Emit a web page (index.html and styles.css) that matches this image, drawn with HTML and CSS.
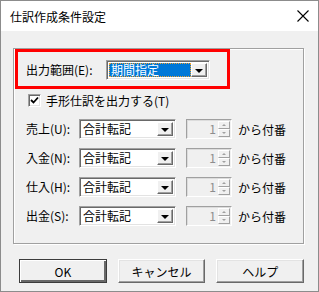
FILE: index.html
```html
<!DOCTYPE html>
<html lang="ja">
<head>
    <meta charset="UTF-8">
    <title>仕訳作成条件設定</title>
    <link rel="stylesheet" href="styles.css">
</head>
<body>
    <div class="window">
        <div class="titlebar">
            <span class="title">仕訳作成条件設定</span>
            <svg class="close" width="12" height="12" viewBox="0 0 12 12">
                <path d="M0.5 0.5 L11.5 11.5 M11.5 0.5 L0.5 11.5" stroke="#000" stroke-width="1.1" fill="none"/>
            </svg>
        </div>
        <div class="content">
            <div class="group">
                <div class="highlight">
                    <span class="label wide">出力範囲(E):</span>
                    <div class="combo focused">
                        <div class="value"><span class="sel">期間指定</span></div>
                        <div class="drop"><i></i></div>
                    </div>
                </div>
                <div class="check-row">
                    <span class="checkbox">
                        <svg width="9" height="9" viewBox="0 0 9 9"><path d="M1 4 L3.5 6.5 L8 1.5" stroke="#000" stroke-width="1.8" fill="none"/></svg>
                    </span>
                    <span>手形仕訳を出力する(T)</span>
                </div>
                <div class="row">
                    <span class="label">売上(U):</span>
                    <div class="combo"><div class="value">合計転記</div><div class="drop"><i></i></div></div>
                    <div class="spin"><div class="num">1</div><div class="arrows"><b class="up"></b><b class="down"></b></div></div>
                    <span class="suffix">から付番</span>
                </div>
                <div class="row">
                    <span class="label">入金(N):</span>
                    <div class="combo"><div class="value">合計転記</div><div class="drop"><i></i></div></div>
                    <div class="spin"><div class="num">1</div><div class="arrows"><b class="up"></b><b class="down"></b></div></div>
                    <span class="suffix">から付番</span>
                </div>
                <div class="row">
                    <span class="label">仕入(H):</span>
                    <div class="combo"><div class="value">合計転記</div><div class="drop"><i></i></div></div>
                    <div class="spin"><div class="num">1</div><div class="arrows"><b class="up"></b><b class="down"></b></div></div>
                    <span class="suffix">から付番</span>
                </div>
                <div class="row">
                    <span class="label">出金(S):</span>
                    <div class="combo"><div class="value">合計転記</div><div class="drop"><i></i></div></div>
                    <div class="spin"><div class="num">1</div><div class="arrows"><b class="up"></b><b class="down"></b></div></div>
                    <span class="suffix">から付番</span>
                </div>
            </div>
            <div class="buttons">
                <button class="default">OK</button>
                <button>キャンセル</button>
                <button>ヘルプ</button>
            </div>
        </div>
    </div>
</body>
</html>
```

FILE: styles.css
```css
* {
    margin: 0;
    padding: 0;
    box-sizing: border-box;
}

body {
    font-family: "Noto Sans CJK JP", "Noto Sans", sans-serif;
    font-size: 12px;
    color: #000;
}

.window {
    width: 319px;
    height: 292px;
    border: 1px solid #8c8c8c;
    background-color: #f0f0f0;
}

.titlebar {
    height: 30px;
    background-color: #fff;
    display: flex;
    align-items: center;
    justify-content: space-between;
    padding: 0 9px 0 9px;
}
.title {
    font-size: 12px;
}

.content {
    padding: 17px 14px 0 12px;
}

.group {
    height: 196px;
    border: 1px solid #a0a0a0;
    box-shadow: inset 1px 1px 0 #fff, 1px 1px 0 #fff;
    padding: 0 0 0 1px;
}

.highlight {
    width: 215px;
    height: 40px;
    border: 3px solid #f00;
    display: flex;
    align-items: center;
    padding: 2px 0 0 8px;
}

.label {
    width: 53px;
    flex: none;
    line-height: 16px;
}
.label.wide {
    width: 80px;
}

.combo {
    width: 97px;
    height: 20px;
    display: flex;
    background-color: #fff;
    border-top: 1px solid #a0a0a0;
    border-left: 1px solid #a0a0a0;
    border-right: 1px solid #fff;
    border-bottom: 1px solid #fff;
    box-shadow: inset 1px 1px 0 #696969, inset -1px -1px 0 #e3e3e3;
    padding: 2px;
}
.combo.focused {
    width: 104px;
}
.value {
    flex: 1;
    line-height: 14px;
    padding-left: 1px;
    white-space: nowrap;
}
.focused .value {
    background-color: #0078d7;
    color: #fff;
    outline: 1px dotted #f0a030;
    outline-offset: -1px;
}
.focused .sel {
    padding-left: 1px;
}
.drop {
    width: 16px;
    flex: none;
    background-color: #f0f0f0;
    border-top: 1px solid #fff;
    border-left: 1px solid #fff;
    border-right: 1px solid #696969;
    border-bottom: 1px solid #696969;
    box-shadow: inset -1px -1px 0 #a0a0a0;
    display: flex;
    align-items: center;
    justify-content: center;
}
.drop i {
    width: 0;
    height: 0;
    border-left: 4px solid transparent;
    border-right: 4px solid transparent;
    border-top: 4px solid #000;
    margin-top: 1px;
}

.check-row {
    display: flex;
    align-items: center;
    gap: 5px;
    height: 16px;
    margin: 3px 0 0 13px;
}
.checkbox {
    width: 13px;
    height: 13px;
    background-color: #fff;
    border-top: 1px solid #a0a0a0;
    border-left: 1px solid #a0a0a0;
    border-right: 1px solid #fff;
    border-bottom: 1px solid #fff;
    box-shadow: inset 1px 1px 0 #696969, inset -1px -1px 0 #e3e3e3;
    display: flex;
    align-items: center;
    justify-content: center;
}

.row {
    display: flex;
    align-items: center;
    height: 20px;
    margin: 9px 0 0 11px;
}
.row + .row {
    margin-top: 9px;
}
.check-row + .row {
    margin-top: 11px;
}

.spin {
    width: 46px;
    height: 20px;
    margin-left: 10px;
    display: flex;
    background-color: #f0f0f0;
    border-top: 1px solid #a0a0a0;
    border-left: 1px solid #a0a0a0;
    border-right: 1px solid #fff;
    border-bottom: 1px solid #fff;
    box-shadow: inset 1px 1px 0 #dcdcdc;
    padding: 1px 1px 1px 2px;
}
.num {
    flex: 1;
    text-align: right;
    color: #8d8d8d;
    line-height: 16px;
    padding-right: 2px;
}
.arrows {
    width: 12px;
    display: flex;
    flex-direction: column;
}
.arrows b {
    flex: 1;
    border-top: 1px solid #fff;
    border-left: 1px solid #fff;
    border-right: 1px solid #a0a0a0;
    border-bottom: 1px solid #a0a0a0;
    display: flex;
    align-items: center;
    justify-content: center;
}
.arrows b::after {
    content: "";
    width: 0;
    height: 0;
    border-left: 2px solid transparent;
    border-right: 2px solid transparent;
}
.arrows .up::after {
    border-bottom: 2px solid #a0a0a0;
}
.arrows .down::after {
    border-top: 2px solid #a0a0a0;
}

.suffix {
    margin-left: 6px;
}

.buttons {
    display: flex;
    gap: 11px;
    margin: 15px 0 0 6px;
}
.buttons button {
    width: 88px;
    height: 24px;
    font-family: "Noto Sans CJK JP", "Noto Sans", sans-serif;
    font-size: 12px;
    background-color: #f0f0f0;
    border-top: 1px solid #fff;
    border-left: 1px solid #fff;
    border-right: 1px solid #696969;
    border-bottom: 1px solid #696969;
    box-shadow: inset -1px -1px 0 #a0a0a0, inset 1px 1px 0 #e3e3e3;
}
.buttons button.default {
    border: 1px solid #3c3c3c;
    box-shadow: inset 1px 1px 0 #fff, inset -2px -2px 0 #696969, inset -1px -1px 0 #a0a0a0;
}
```
